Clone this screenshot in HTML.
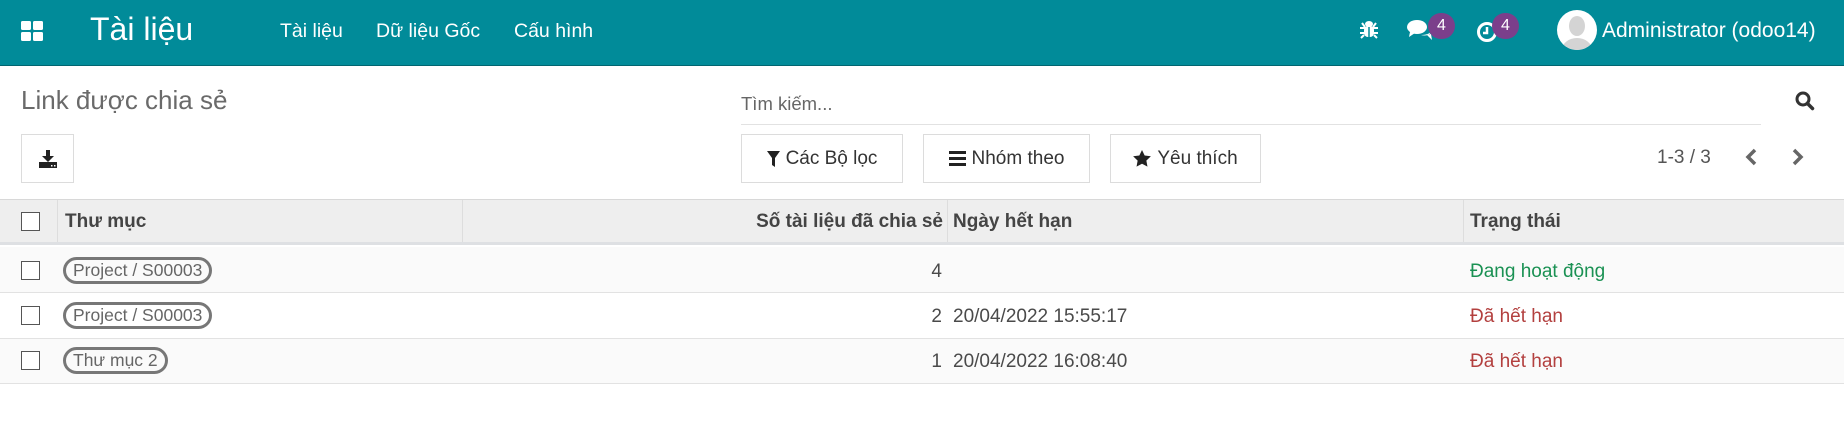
<!DOCTYPE html>
<html><head><meta charset="utf-8"><style>
*{box-sizing:border-box;margin:0;padding:0}
body{width:1844px;height:427px;overflow:hidden;background:#fff;font-family:"Liberation Sans",sans-serif;color:#4c4c4c;position:relative}
.a{position:absolute;white-space:nowrap}
.nav{position:absolute;left:0;top:0;width:1844px;height:66px;background:#018b99;border-bottom:1px solid #016570}
.w{color:#fff}
.btn{position:absolute;border:1px solid #dcdcdc;background:#fff;height:49px;top:134px;font-size:19px;color:#333;display:flex;align-items:center;justify-content:center;gap:6px}
.cb{position:absolute;left:21px;width:19px;height:19px;border:1px solid #555;background:#fff}
.tag{position:absolute;left:63px;height:27px;border:3px solid #777;border-radius:14px;font-size:17.5px;color:#666;padding:0 7px;line-height:21px}
.row{position:absolute;left:0;width:1844px;height:46px;border-bottom:1px solid #e2e2e2}
.t{font-size:19px;color:#4a4a4a}
</style></head><body>
<div class="nav">
<svg class="a" style="left:21px;top:21px" width="22" height="20"><rect x="0" y="0" width="10" height="9" rx="1.5" fill="#fff"/><rect x="12" y="0" width="10" height="9" rx="1.5" fill="#fff"/><rect x="0" y="11" width="10" height="9" rx="1.5" fill="#fff"/><rect x="12" y="11" width="10" height="9" rx="1.5" fill="#fff"/></svg>
<div class="a w" style="left:90px;top:11px;font-size:32px">Tài liệu</div>
<div class="a w" style="left:280px;top:20px;font-size:19.5px">Tài liệu</div>
<div class="a w" style="left:376px;top:20px;font-size:19.5px">Dữ liệu Gốc</div>
<div class="a w" style="left:514px;top:20px;font-size:19.5px">Cấu hình</div>
<svg class="a" style="left:1360px;top:20px" width="18" height="19" viewBox="0 0 18 19"><ellipse cx="9" cy="4" rx="4" ry="3" fill="#fff"/><rect x="4" y="6" width="10" height="11" rx="4" fill="#fff"/><path d="M0 8h18M0 13h18M2 3l3 4M16 3l-3 4M1 18l3-3M17 18l-3-3" stroke="#fff" stroke-width="2"/><path d="M9 7v10" stroke="#018b99" stroke-width="1.5"/></svg>
<svg class="a" style="left:1407px;top:19px" width="28" height="22"><ellipse cx="10" cy="8" rx="10" ry="7" fill="#fff"/><path d="M3 13l-1 5 6-4z" fill="#fff"/><path d="M14 16c6 0 11-2 11-6v0c0 4-4 8-11 6z M20 16l5 5-1-6z" fill="#fff"/></svg>
<div class="a" style="left:1428px;top:13px;width:27px;height:26px;border-radius:13px;background:#7b3f8b;color:#fff;font-size:16px;text-align:center;line-height:26px">4</div>
<svg class="a" style="left:1476px;top:21px" width="22" height="22"><circle cx="11" cy="11" r="8.5" fill="none" stroke="#fff" stroke-width="3"/><path d="M11 6v6h-4" stroke="#fff" stroke-width="2.5" fill="none"/></svg>
<div class="a" style="left:1492px;top:13px;width:27px;height:26px;border-radius:13px;background:#7b3f8b;color:#fff;font-size:16px;text-align:center;line-height:26px">4</div>
<svg class="a" style="left:1557px;top:10px" width="40" height="40"><defs><clipPath id="c"><circle cx="20" cy="20" r="20"/></clipPath></defs><circle cx="20" cy="20" r="20" fill="#fff"/><g clip-path="url(#c)" fill="#d4d4d4"><ellipse cx="20" cy="16" rx="8" ry="10"/><ellipse cx="20" cy="40" rx="15" ry="12"/></g></svg>
<div class="a w" style="left:1602px;top:19px;font-size:21px">Administrator (odoo14)</div>
</div>
<div class="a" style="left:21px;top:85px;font-size:26px;color:#6a6a6a">Link được chia sẻ</div>
<div class="a" style="left:741px;top:93px;font-size:18.5px;color:#666">Tìm kiếm...</div>
<div class="a" style="left:741px;top:124px;width:1020px;height:1px;background:#e2e2e2"></div>
<svg class="a" style="left:1795px;top:91px" width="20" height="20"><circle cx="8" cy="8" r="6" fill="none" stroke="#333" stroke-width="3"/><path d="M12.5 12.5l5 5" stroke="#333" stroke-width="3.5" stroke-linecap="round"/></svg>
<div class="btn" style="left:21px;width:53px;top:134px;height:49px"><svg width="18" height="18"><path d="M7 0h4v6h4l-6 6-6-6h4z" fill="#222"/><rect x="0" y="12" width="18" height="6" fill="#222"/><rect x="12" y="15" width="1.5" height="1.5" fill="#fff"/><rect x="15" y="15" width="1.5" height="1.5" fill="#fff"/></svg></div>
<div class="btn" style="left:741px;width:162px"><svg width="13" height="16"><path d="M0 0h13l-5 7v9l-3-2v-7z" fill="#222"/></svg>Các Bộ lọc</div>
<div class="btn" style="left:923px;width:167px"><svg width="17" height="15"><rect y="0" width="17" height="3" fill="#222"/><rect y="6" width="17" height="3" fill="#222"/><rect y="12" width="17" height="3" fill="#222"/></svg>Nhóm theo</div>
<div class="btn" style="left:1110px;width:151px"><svg width="18" height="17" viewBox="0 0 24 23"><path d="M12 0l3.6 7.5 8.4 1-6.1 5.8 1.5 8.2L12 18.6 4.6 22.5l1.5-8.2L0 8.5l8.4-1z" fill="#222"/></svg>Yêu thích</div>
<div class="a" style="left:1657px;top:147px;font-size:19px;color:#555">1-3 / 3</div>
<svg class="a" style="left:1744px;top:148px" width="14" height="18"><path d="M11 2L4 9l7 7" stroke="#666" stroke-width="3.5" fill="none"/></svg>
<svg class="a" style="left:1791px;top:148px" width="14" height="18"><path d="M3 2l7 7-7 7" stroke="#666" stroke-width="3.5" fill="none"/></svg>
<div class="a" style="left:0;top:199px;width:1844px;height:1px;background:#d8d8d8"></div>
<div class="a" style="left:0;top:200px;width:1844px;height:45px;background:#eeeeee;border-bottom:3px solid #dee0e3"></div>
<div class="a" style="left:57px;top:200px;width:1px;height:42px;background:#ddd"></div>
<div class="a" style="left:462px;top:200px;width:1px;height:42px;background:#ddd"></div>
<div class="a" style="left:947px;top:200px;width:1px;height:42px;background:#ddd"></div>
<div class="a" style="left:1463px;top:200px;width:1px;height:42px;background:#ddd"></div>
<div class="cb" style="top:212px"></div>
<div class="a t" style="left:65px;top:211px;font-weight:bold;color:#444">Thư mục</div>
<div class="a t" style="right:901px;top:211px;font-weight:bold;color:#444">Số tài liệu đã chia sẻ</div>
<div class="a t" style="left:953px;top:211px;font-weight:bold;color:#444">Ngày hết hạn</div>
<div class="a t" style="left:1470px;top:211px;font-weight:bold;color:#444">Trạng thái</div>
<div class="row" style="top:247px;height:46px;background:#fafafa"></div>
<div class="row" style="top:293px;height:46px;background:#fff"></div>
<div class="row" style="top:339px;height:45px;background:#fafafa"></div>
<div class="cb" style="top:261px"></div><div class="cb" style="top:306px"></div><div class="cb" style="top:351px"></div>
<div class="tag" style="top:257px">Project / S00003</div>
<div class="tag" style="top:302px">Project / S00003</div>
<div class="tag" style="top:347px">Thư mục 2</div>
<div class="a t" style="right:902px;top:261px">4</div>
<div class="a t" style="right:902px;top:306px">2</div>
<div class="a t" style="right:902px;top:351px">1</div>
<div class="a t" style="left:953px;top:306px">20/04/2022 15:55:17</div>
<div class="a t" style="left:953px;top:351px">20/04/2022 16:08:40</div>
<div class="a t" style="left:1470px;top:261px;color:#1a9153">Đang hoạt động</div>
<div class="a t" style="left:1470px;top:306px;color:#b3403f">Đã hết hạn</div>
<div class="a t" style="left:1470px;top:351px;color:#b3403f">Đã hết hạn</div>
</body></html>
